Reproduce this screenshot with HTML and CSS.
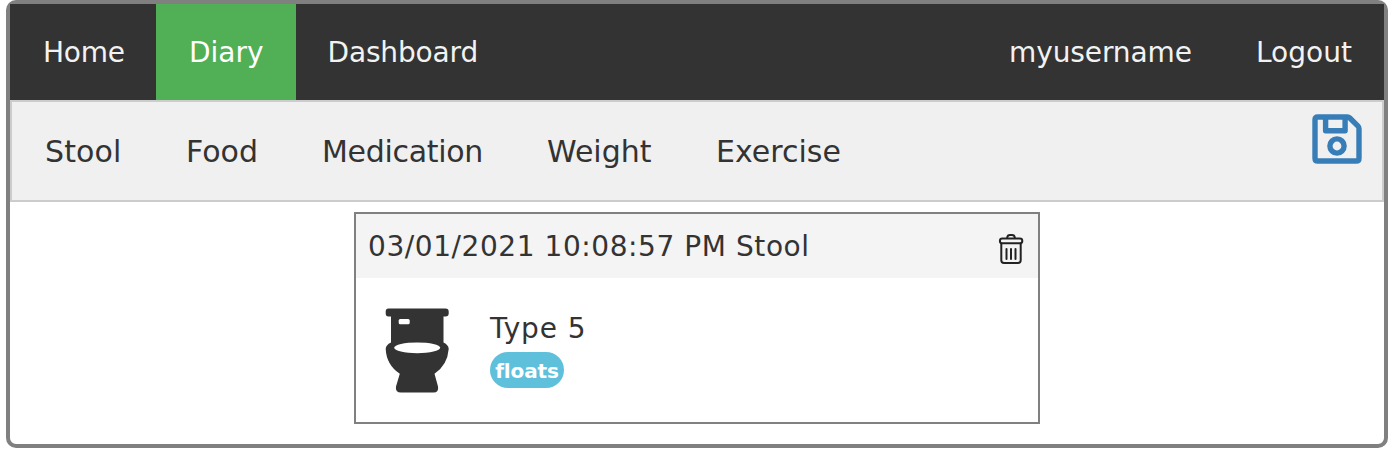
FILE: index.html
```html
<!DOCTYPE html>
<html lang="en">
<head>
<meta charset="utf-8">
<title>Diary</title>
<link rel="stylesheet" href="styles.css">
</head>
<body>
<div class="app">
  <nav class="topnav">
    <a class="home">Home</a>
    <a class="diary active">Diary</a>
    <a class="dashboard">Dashboard</a>
    <a class="username">myusername</a>
    <a class="logout">Logout</a>
  </nav>
  <nav class="subnav">
    <a class="stool">Stool</a>
    <a class="food">Food</a>
    <a class="medication">Medication</a>
    <a class="weight">Weight</a>
    <a class="exercise">Exercise</a>
    <svg class="save" viewBox="0 0 50 50" fill="none" stroke="#377db8" stroke-width="5.4" stroke-linejoin="round">
      <path d="M5.800 3H35.200Q36.800 3 37.800 4L46 12.200Q47 13.200 47 14.800V44.200Q47 47 44.200 47H5.800Q3 47 3 44.200V5.800Q3 3 5.800 3Z"/>
      <path d="M13.600 3V16.800H33.100V3"/>
      <circle cx="25" cy="32" r="7.100"/>
    </svg>
  </nav>
  <main class="card">
    <header class="card-header">
      <span class="date">03/01/2021 10:08:57 PM Stool</span>
      <svg class="trash" viewBox="0 0 26 32" fill="none" stroke="#222" stroke-width="2">
        <path d="M9.200 5.500V4.500Q9.500 2 12 2H14Q16.500 2 16.800 4.500V5.500"/>
        <rect x="1.900" y="5.500" width="22.400" height="4.800" rx="2.400"/>
        <path d="M3.300 10V27.300Q3.300 30 6 30H20Q22.700 30 22.700 27.300V10"/>
        <path d="M8.500 16V26M13 16V26M17.500 16V26" stroke-linecap="round"/>
      </svg>
    </header>
    <div class="card-body">
      <svg class="toilet" viewBox="0 0 64 86">
        <path fill="#333" d="M3.500 .5H60.500Q63.700 .5 63.700 3.500V5.500Q63.700 8.500 60.500 8.500H58.500V34.500Q63.700 37 63.700 41Q62.500 57 49.500 65.800L53 78.500Q54 84.500 48.500 84.500H16Q10 84.500 11 78.500L14.800 65.800Q1.500 57 .700 41Q.700 37 6 34.500V8.500H3.500Q.700 8.500 .700 5.500V3.500Q.700 .5 3.500 .5Z"/>
        <rect x="13.700" y="11" width="11" height="5.300" rx="1.500" fill="#fff"/>
        <ellipse cx="32.200" cy="39.800" rx="23" ry="5.400" fill="#fff"/>
      </svg>
      <div class="details">
        <div class="type">Type 5</div>
        <span class="badge">floats</span>
      </div>
    </div>
  </main>
</div>
</body>
</html>
```
FILE: styles.css
```css
* { box-sizing: border-box; }
body {
  margin: 0 6px;
  background: #fff;
  color: #333;
  font: 28px/32px Verdana, "DejaVu Sans", sans-serif;
  font-variant-ligatures: none;
}
.app {
  height: 448px;
  border: 4px solid #808080;
  border-radius: 10px;
}
.topnav {
  display: flex;
  height: 96px;
  background: #333;
  color: #f2f2f2;
}
.topnav a {
  padding: 33px 0 0 32px;
  white-space: nowrap;
}
.topnav .home, .topnav .diary { padding-left: 33px; }
.home { width: 146px; letter-spacing: -0.2px; }
.diary { width: 140px; }
.dashboard { width: 214px; letter-spacing: -0.15px; }
.topnav .dashboard { padding-left: 31.500px; }
.active { background: #51af55; color: #fff; }
.username { width: 247px; margin-left: auto; letter-spacing: -0.1px; }
.logout { width: 159px; }
.topnav .username, .topnav .logout { padding-left: 31px; }
.subnav {
  display: flex;
  height: 102px;
  border: 2px solid #ccc;
  background: #f0f0f0;
  font-size: 30px;
}
.subnav a {
  padding: 34px 0 0 33px;
  white-space: nowrap;
}
.stool { width: 141px; letter-spacing: 0.1px; }
.food { width: 136px; }
.medication { width: 225px; letter-spacing: -0.3px; }
.weight { width: 169px; }
.exercise { width: 190px; }
.save {
  width: 50px;
  height: 50px;
  margin: 12px 20px 0 auto;
}
.card {
  width: 686px;
  height: 212px;
  margin: 10px auto 0;
  border: 2px solid #808080;
}
.card-header {
  display: flex;
  justify-content: space-between;
  height: 64px;
  padding: 17px 14px 0 12px;
  background: #f4f4f4;
}
.date { letter-spacing: 0.57px; }
.trash {
  width: 26px;
  height: 32px;
  margin-top: 2px;
}
.card-body {
  display: flex;
  gap: 40px;
  padding: 30px 0 0 29px;
}
.toilet {
  width: 64px;
  height: 86px;
}
.details { padding-top: 5px; }
.type { margin-left: 1px; letter-spacing: 0.9px; }
.badge {
  display: block;
  width: 74px;
  height: 36px;
  margin: 7px 0 0 1px;
  border-radius: 18px;
  background: #5fc0dc;
  color: #fff;
  font-size: 20px;
  font-weight: bold;
  letter-spacing: -0.1px;
  line-height: 38px;
  text-align: center;
}
```
